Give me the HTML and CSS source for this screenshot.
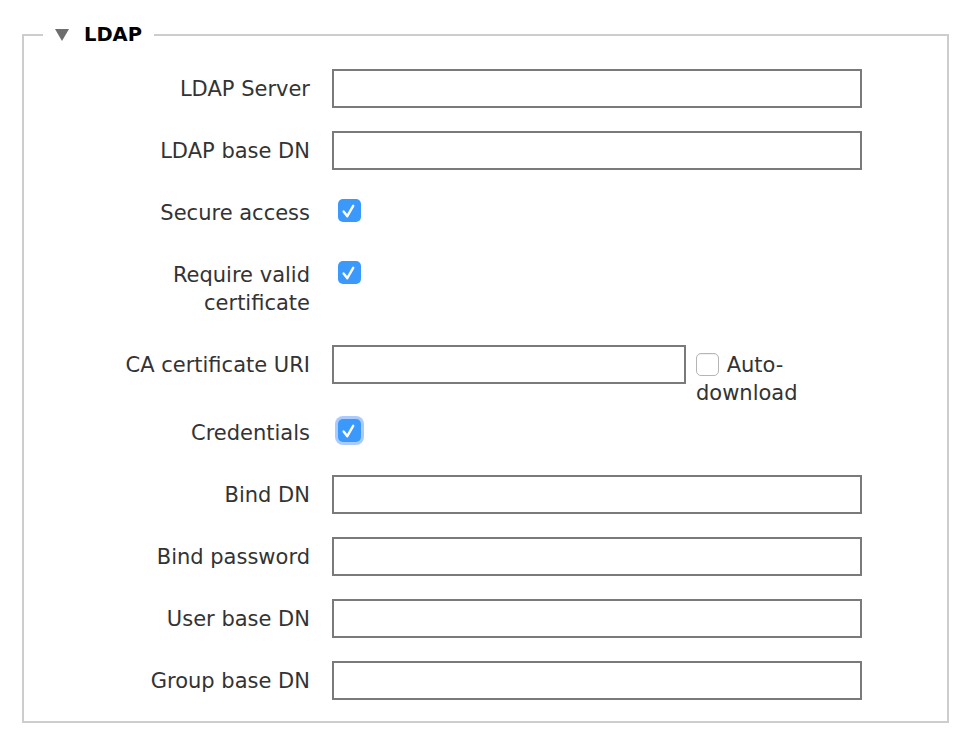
FILE: index.html
```html
<!DOCTYPE html>
<html>
<head>
<meta charset="utf-8">
<link rel="stylesheet" href="styles.css">
</head>
<body>
<fieldset class="panel">
  <legend class="panel-title"><span class="tri"></span>LDAP</legend>
  <div class="form">
    <div class="row">
      <label class="lbl">LDAP Server</label>
      <input class="txt" type="text">
    </div>
    <div class="row">
      <label class="lbl">LDAP base DN</label>
      <input class="txt" type="text">
    </div>
    <div class="row">
      <label class="lbl">Secure access</label>
      <span class="cb on"><svg viewBox="0 0 23 23" width="23" height="23"><path d="M5.6 12.4 L9.3 17.2 L15.2 6.8" fill="none" stroke="#fff" stroke-width="2.4" stroke-linecap="round" stroke-linejoin="round"/></svg></span>
    </div>
    <div class="row">
      <label class="lbl">Require valid<br>certificate</label>
      <span class="cb on"><svg viewBox="0 0 23 23" width="23" height="23"><path d="M5.6 12.4 L9.3 17.2 L15.2 6.8" fill="none" stroke="#fff" stroke-width="2.4" stroke-linecap="round" stroke-linejoin="round"/></svg></span>
    </div>
    <div class="row row-ca">
      <label class="lbl">CA certificate URI</label>
      <input class="txt txt-short" type="text">
      <span class="auto"><span class="cb off"></span> Auto-download</span>
    </div>
    <div class="row">
      <label class="lbl">Credentials</label>
      <span class="cb on focus"><svg viewBox="0 0 23 23" width="23" height="23"><path d="M5.6 12.4 L9.3 17.2 L15.2 6.8" fill="none" stroke="#fff" stroke-width="2.4" stroke-linecap="round" stroke-linejoin="round"/></svg></span>
    </div>
    <div class="row">
      <label class="lbl">Bind DN</label>
      <input class="txt" type="text">
    </div>
    <div class="row">
      <label class="lbl">Bind password</label>
      <input class="txt" type="password">
    </div>
    <div class="row">
      <label class="lbl">User base DN</label>
      <input class="txt" type="text">
    </div>
    <div class="row">
      <label class="lbl">Group base DN</label>
      <input class="txt" type="text">
    </div>
  </div>
</fieldset>
</body>
</html>
```

FILE: styles.css
```css
html, body {
  margin: 0;
  padding: 0;
  background: #fff;
}
body {
  font-family: "DejaVu Sans", "Noto Sans", sans-serif;
  font-size: 21px;
  color: #333;
}
.panel {
  margin: 21px 0 0 22px;
  width: 927px;
  box-sizing: border-box;
  border: 2px solid #cdcdcd;
  padding: 0 0 21px 0;
  min-inline-size: 0;
}
.panel-title {
  margin-left: 19px;
  padding: 0 12px;
  line-height: 28px;
  font-size: 19.5px;
  font-weight: bold;
  color: #000;
  display: flex;
  align-items: center;
}
.tri {
  width: 0;
  height: 0;
  border-left: 7.5px solid transparent;
  border-right: 7.5px solid transparent;
  border-top: 12px solid #6e6e6e;
  margin-right: 15px;
}
.form {
  padding-top: 20px;
  display: flex;
  flex-direction: column;
  gap: 23px;
}
.row {
  display: flex;
  align-items: flex-start;
}
.lbl {
  width: 286px;
  flex: none;
  text-align: right;
  line-height: 28px;
  padding: 6px 0 5px 0;
  margin-right: 22px;
}
.txt {
  width: 530px;
  height: 39px;
  box-sizing: border-box;
  border: 2px solid #7a7a7a;
  border-radius: 0;
  margin: 0;
  padding: 0 6px;
  font: inherit;
  background: #fff;
}
.txt-short {
  width: 354px;
}
.row-ca {
  height: 45px;
}
.cb {
  flex: none;
  width: 23px;
  height: 23px;
  box-sizing: border-box;
  border-radius: 5px;
  margin: 6px 0 0 6px;
  display: inline-block;
}
.cb svg {
  display: block;
}
.cb.on {
  background: #3b99fc;
}
.cb.off {
  background: #fff;
  border: 1px solid #b5b5b5;
  margin: 0 1px 0 0;
  vertical-align: -4px;
  box-shadow: inset 0 1px 1px rgba(0,0,0,0.06);
}
.cb.focus {
  box-shadow: 0 0 0 3px rgba(100,160,250,0.55);
}
.auto {
  width: 112px;
  margin: 6px 0 0 10px;
  line-height: 28px;
}
```
